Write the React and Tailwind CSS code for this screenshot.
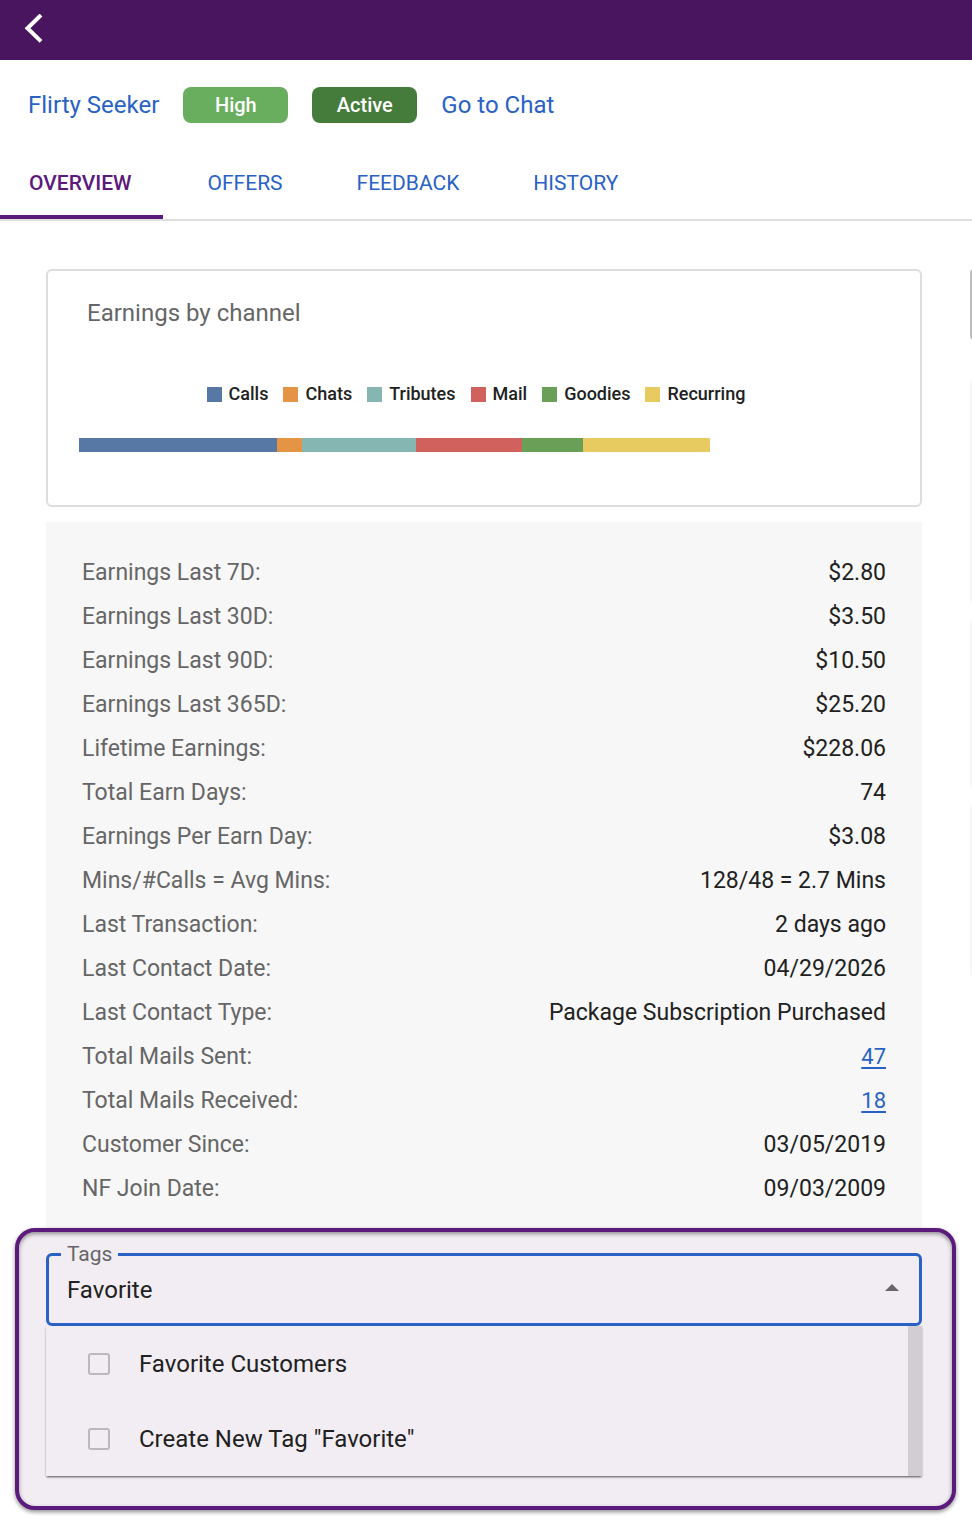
import { useState } from "react";

const tabs = ["OVERVIEW", "OFFERS", "FEEDBACK", "HISTORY"];

const channels = [
  { name: "Calls", color: "bg-[#5778a4]", share: 198 },
  { name: "Chats", color: "bg-[#e49444]", share: 25 },
  { name: "Tributes", color: "bg-[#85b6b2]", share: 114 },
  { name: "Mail", color: "bg-[#d1615d]", share: 106 },
  { name: "Goodies", color: "bg-[#6a9f58]", share: 61 },
  { name: "Recurring", color: "bg-[#e7ca60]", share: 127 },
];

const stats = [
  { label: "Earnings Last 7D:", value: "$2.80" },
  { label: "Earnings Last 30D:", value: "$3.50" },
  { label: "Earnings Last 90D:", value: "$10.50" },
  { label: "Earnings Last 365D:", value: "$25.20" },
  { label: "Lifetime Earnings:", value: "$228.06" },
  { label: "Total Earn Days:", value: "74" },
  { label: "Earnings Per Earn Day:", value: "$3.08" },
  { label: "Mins/#Calls = Avg Mins:", value: "128/48 = 2.7 Mins" },
  { label: "Last Transaction:", value: "2 days ago" },
  { label: "Last Contact Date:", value: "04/29/2026" },
  { label: "Last Contact Type:", value: "Package Subscription Purchased" },
  { label: "Total Mails Sent:", value: "47", href: "#sent" },
  { label: "Total Mails Received:", value: "18", href: "#received" },
  { label: "Customer Since:", value: "03/05/2019" },
  { label: "NF Join Date:", value: "09/03/2009" },
];

function CustomerBar() {
  return (
    <div className="flex h-[90px] items-center gap-6 px-7 text-2xl text-[#2962c4]">
      <a href="#customer">Flirty Seeker</a>
      <span className="flex h-9 w-[105px] items-center justify-center rounded-lg bg-[#69ae5e] text-xl font-medium text-white">
        High
      </span>
      <span className="flex h-9 w-[105px] items-center justify-center rounded-lg bg-[#457c3b] text-xl font-medium text-white">
        Active
      </span>
      <a href="#chat">Go to Chat</a>
    </div>
  );
}

function TabBar({ active, onChange }) {
  return (
    <nav role="tablist" className="flex h-[71px] border-b-2 border-[#dfdfdf]">
      {tabs.map((tab) => (
        <button
          key={tab}
          type="button"
          role="tab"
          aria-selected={tab === active}
          onClick={() => onChange(tab)}
          className={
            "border-b-4 px-[37px] pt-0.5 text-[21px] first:mr-2 first:pr-[31px] first:pl-[29px] " +
            (tab === active
              ? "border-[#5b1a7c] font-medium text-[#5b1a7c]"
              : "border-transparent text-[#2962c4]")
          }
        >
          {tab}
        </button>
      ))}
    </nav>
  );
}

function EarningsChart() {
  return (
    <section className="h-[238px] rounded-md border-2 border-[#dddddd]">
      <h2 className="mt-6 px-[39px] text-2xl leading-9 text-[#666666]">
        Earnings by channel
      </h2>
      <ul className="mt-[51px] flex justify-center gap-[15px] pr-4 text-lg leading-6 font-medium text-[#212121]">
        {channels.map((channel) => (
          <li key={channel.name} className="flex items-center gap-[7px]">
            <span className={"size-[15px] " + channel.color} />
            {channel.name}
          </li>
        ))}
      </ul>
      <div className="mt-8 ml-[31px] flex h-3.5 w-[72.4%]">
        {channels.map((channel) => (
          <div
            key={channel.name}
            className={channel.color}
            style={{ flexGrow: channel.share }}
          />
        ))}
      </div>
    </section>
  );
}

function StatList() {
  return (
    <dl className="mt-[15px] bg-[#f7f7f7] px-9 pt-[29px] pb-[17px] text-[23px] leading-[44px]">
      {stats.map((stat) => (
        <div key={stat.label} className="flex h-11 justify-between">
          <dt className="text-[#666666]">{stat.label}</dt>
          <dd className="text-[#212121]">
            {stat.href ? (
              <a
                href={stat.href}
                className="text-[22px] text-[#2962c4] underline decoration-2 underline-offset-3"
              >
                {stat.value}
              </a>
            ) : (
              stat.value
            )}
          </dd>
        </div>
      ))}
    </dl>
  );
}

function TagPicker() {
  const [query, setQuery] = useState("Favorite");
  const options = ["Favorite Customers", `Create New Tag "${query}"`];

  return (
    <section className="-mr-[34px] -ml-[31px] rounded-[20px] border-4 border-[#5b1a7c] bg-[#f1edf3] pt-2.5 pr-[30px] pb-[30px] pl-[27px] shadow-[0_2px_4px_rgba(0,0,0,0.45),inset_0_2px_4px_rgba(0,0,0,0.4)]">
      <fieldset className="rounded-md border-3 border-[#2962c4] px-3 pb-2.5">
        <legend className="px-1.5 text-[21px] leading-6 text-[#666666]">
          <label htmlFor="tags">Tags</label>
        </legend>
        <div className="flex h-[47px] items-center pr-2 pl-1.5">
          <input
            id="tags"
            type="text"
            value={query}
            onChange={(e) => setQuery(e.target.value)}
            className="min-w-0 grow text-2xl text-[#212121] outline-none"
          />
          <svg viewBox="0 0 14 7" className="mb-1 h-[7px] w-3.5 fill-[#666666]">
            <path d="M0 7 7 0l7 7z" />
          </svg>
        </div>
      </fieldset>
      <div className="flex shadow-[0_2px_2px_-1px_rgba(0,0,0,0.5),0_1px_2px_rgba(0,0,0,0.25)]">
        <ul className="grow bg-[#f1edf3]">
          {options.map((option) => (
            <li key={option}>
              <label className="flex h-[75px] items-center gap-[29px] pl-[42px] text-2xl text-[#212121]">
                <input
                  type="checkbox"
                  className="size-[22px] appearance-none rounded-[3px] border-2 border-[#bcb9be] checked:bg-[#5b1a7c]"
                />
                {option}
              </label>
            </li>
          ))}
        </ul>
        <div className="w-3.5 bg-[#d2cdd3]" />
      </div>
    </section>
  );
}

export default function App() {
  const [activeTab, setActiveTab] = useState("OVERVIEW");

  return (
    <div className="overflow-hidden bg-white pb-[30px] font-['Roboto',sans-serif]">
      <header className="flex h-[60px] items-center bg-[#4a155f] px-6">
        <button type="button" aria-label="Back">
          <svg
            viewBox="0 0 20 32"
            className="h-8 w-5 fill-none stroke-white stroke-4"
          >
            <path d="M17 1 3.500 14.200 17 27.400" />
          </svg>
        </button>
      </header>
      <CustomerBar />
      <TabBar active={activeTab} onChange={setActiveTab} />

      <main className="flex gap-12 pt-12 pl-[46px]">
        <div className="w-[calc(100vw-96px)] flex-none">
          <EarningsChart />
          <StatList />
          <TagPicker />
        </div>
        <aside className="w-[calc(100vw-96px)] flex-none">
          <div className="h-[71px] rounded-sm border-2 border-[#bdbdbd]" />
          <div className="mt-[38px] h-[226px] rounded-sm bg-[#f7f7f7]" />
          <div className="mt-3.5 h-[172px] rounded-sm bg-[#f7f7f7]" />
          <div className="mt-3.5 h-[172px] rounded-sm bg-[#f7f7f7]" />
        </aside>
      </main>
    </div>
  );
}
